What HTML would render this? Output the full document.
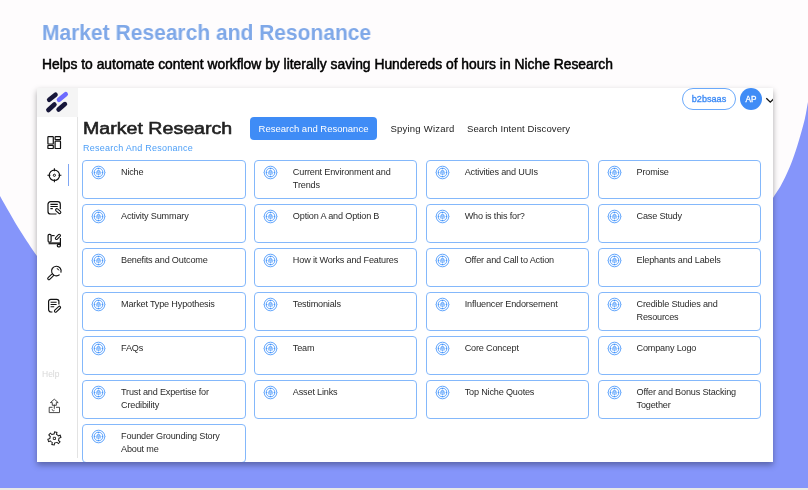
<!DOCTYPE html>
<html lang="en">
<head>
<meta charset="utf-8">
<title>Market Research and Resonance</title>
<style>
*{box-sizing:border-box;margin:0;padding:0}
html,body{width:808px;height:490px;overflow:hidden;background:#fefcfd}
body{position:relative;font-family:"Liberation Sans",sans-serif;color:#222}
#bg{position:absolute;left:0;top:0;width:808px;height:490px}
#strip{position:absolute;left:0;top:488px;width:808px;height:2px;background:#e9e9e7}
#title{position:absolute;left:42px;top:19px;font-size:22px;line-height:28px;font-weight:700;color:#7fa8e8;white-space:nowrap;transform:scaleX(.9545);transform-origin:0 0}
#sub{position:absolute;left:42px;top:54.8px;font-size:13.85px;line-height:18px;font-weight:400;color:#000;white-space:nowrap;-webkit-text-stroke:0.5px #000}
#app{position:absolute;left:37px;top:88px;width:736px;height:374px;background:#fff;box-shadow:0 3px 6px rgba(0,0,10,.34);overflow:hidden}
#in,#sub,#title{will-change:transform}
#in{position:absolute;left:0;top:-1px;width:736px;height:375px}
#side{position:absolute;left:0;top:0;width:41px;height:371px;border-right:1px solid #e3e3e3}
#logo{position:absolute;left:0;top:1px;width:41px;height:29px;background:#f5f5f5}
#side svg{position:absolute;overflow:visible}
#help{position:absolute;left:5px;top:282px;font-size:8.5px;color:#d8d8d8}
#active{position:absolute;left:30.5px;top:77px;width:1.5px;height:22px;background:#7fa6f3}
#h1{position:absolute;left:46px;top:30.5px;font-size:16px;font-weight:400;-webkit-text-stroke:.55px #222;line-height:22px;color:#222;white-space:nowrap;transform:scaleX(1.225);transform-origin:0 0}
#crumb{position:absolute;left:46px;top:55px;font-size:9px;line-height:12px;color:#4d9ff7;white-space:nowrap;letter-spacing:0.25px}
.tab{position:absolute;top:30px;height:23px;line-height:23px;font-size:9.5px;color:#222;white-space:nowrap}
#tab1{left:213px;width:127px;background:#3f8cf6;color:#fff;border-radius:4px;text-align:center}
#tab2{left:353.5px;letter-spacing:.22px}
#tab3{left:430px;letter-spacing:.1px}
#pill{position:absolute;left:645px;top:1px;width:54px;height:22px;border:1px solid #6aa9fb;border-radius:11px;color:#3f8cf6;font-weight:400;-webkit-text-stroke:.35px #3f8cf6;font-size:9.1px;line-height:21.5px;text-align:center}
#ava{position:absolute;left:703px;top:1px;width:22px;height:22px;border-radius:11px;background:#3f8cf6;color:#fff;font-size:8.2px;line-height:23.5px;text-align:center;-webkit-text-stroke:.3px #fff}
#chev{position:absolute;left:728px;top:10px}
.c{position:absolute;width:163.6px;height:39px;border:1px solid #84b8fb;border-radius:4px;background:#fff;font-size:9.1px;line-height:13px;letter-spacing:-.17px;color:#2a2a2a;padding:5px 4px 0 38px;white-space:nowrap}
.c svg{position:absolute;left:9px;top:5px;width:14px;height:14px;overflow:visible}
</style>
</head>
<body>
<svg id="bg" viewBox="0 0 808 490">
<path d="M0 196C5.0 204.9 13.8 220.5 20 230.5C26.2 240.5 31.2 247.6 37 256C42.8 264.4 49.5 273.7 55 281L55 490L0 490Z" fill="#8595fa"/>
<path d="M808 102C806.8 107.9 806.3 112.9 804.7 119.5C803.1 126.1 800.6 134.8 798.6 141.5C796.6 148.2 794.5 154.5 792.5 160C790.5 165.5 788.4 170.1 786.4 174.6C784.4 179.1 782.4 182.9 780.2 186.8C778.0 190.7 777.5 190.6 773 198C768.5 205.4 759.2 221.5 753 231C746.8 240.5 741.5 247.7 736 255L736 490L808 490Z" fill="#8595fa"/>
<rect x="0" y="300" width="808" height="190" fill="#8595fa"/>
</svg>
<div id="strip"></div>
<div id="title">Market Research and Resonance</div>
<div id="sub">Helps to automate content workflow by literally saving Hundereds of hours in Niche Research</div>
<div id="app"><div id="in">
<div id="side">
<div id="logo"></div>
<!--SIDE--><svg width="41" height="375" viewBox="0 0 41 375" style="left:0;top:0">
<g fill="none" stroke-linecap="round" stroke-width="4.6">
<path d="M12.2 12.8L18.5 7.7M11.4 23L17.4 17.5M21.6 22.6L27.9 17.1" stroke="#17173a"/>
<path d="M22 12.8L28.7 7.3" stroke="#6d6bff"/>
</g>
<g fill="none" stroke="#111" stroke-width="1.2">
<rect x="10.9" y="49.6" width="5.4" height="7.4" rx=".6"/><rect x="10.9" y="58.4" width="5.4" height="3.1" rx=".6"/>
<rect x="18.1" y="49.6" width="5.4" height="3.1" rx=".6"/><rect x="18.1" y="54.1" width="5.4" height="7.4" rx=".6"/>
<circle cx="17.4" cy="88.3" r="5.2"/><circle cx="17.4" cy="88.3" r="1.1" stroke-width="1"/>
<path d="M17.4 81.3v3M17.4 92.3v3M10.4 88.3h3M21.4 88.3h3" stroke-width="1.1"/>
<path d="M19.5 127H13.6a2.6 2.6 0 0 1-2.6-2.6V117.3a2.6 2.6 0 0 1 2.6-2.6H20.7a2.6 2.6 0 0 1 2.6 2.6V122.3"/>
<path d="M13.4 117.4H20.8M13.4 119.5H20.8M13.4 121.6H15.8" stroke-width="1.1"/>
<path d="M19.8 122.9L22.6 125.3" stroke-width="3.5" stroke-linecap="round"/><path d="M19.8 122.9L22.6 125.3" stroke="#fff" stroke-width="1.4" stroke-linecap="round"/>
<rect x="11.1" y="147.4" width="3" height="7.8" rx="1.2"/>
<path d="M14.5 148.6H17.6" stroke-width="1.1"/>
<path d="M11.6 156.3H23" stroke-width="2" stroke="#2c2c2c"/>
<path d="M23.4 151V158.4"/>
<rect x="20.3" y="157.3" width="3.1" height="2.5" rx="1.1"/>
<path d="M19.5 151.3L22.3 148.5" stroke-width="3.3" stroke-linecap="round"/><path d="M19.5 151.3L22.3 148.5" stroke="#fff" stroke-width="1.2" stroke-linecap="round"/>
<path d="M22.6 187.6A4.8 4.8 0 1 1 23.9 185.6"/><path d="M19.8 181.6A2.6 2.6 0 0 1 21.9 183.4" stroke-width="1"/>
<path d="M15.3 188.2L11.9 191.5" stroke-width="3.4" stroke-linecap="round"/><path d="M15.3 188.2L11.9 191.5" stroke="#fff" stroke-width="1.2" stroke-linecap="round"/>
<path d="M21.9 217.6V214.6a2.2 2.2 0 0 0-2.2-2.2H13.8a2.2 2.2 0 0 0-2.2 2.2V222.6a2.4 2.4 0 0 0 2.4 2.4H15.4"/>
<path d="M13.6 215.3H19.6M13.6 217.5H19.6M13.6 219.7H17.2" stroke-width="1.1"/>
<path d="M18.6 224L22.4 220.4" stroke-width="3.4" stroke-linecap="round"/><path d="M18.6 224L22.4 220.4" stroke="#fff" stroke-width="1.2" stroke-linecap="round"/>
</g>
<g fill="none" stroke="#333" stroke-width=".9" stroke-linejoin="round">
<path d="M17.3 312.2L21.2 315.6H19.3V318.3H15.3V315.6H13.4Z"/>
<path d="M12.2 320.3H15.5M19 320.3H22.5V325.6H12.2V320.3M17.3 317.5V321.8M15.2 322.2a1.3 1.3 0 0 0 2.2 1.2"/>
<circle cx="17.4" cy="351.4" r="5" fill="#1a1a1a" stroke="none"/><path d="M17.40 351.40L24.06 349.24M17.40 351.40L22.60 356.08M17.40 351.40L15.94 358.25M17.40 351.40L10.74 353.56M17.40 351.40L12.20 346.72M17.40 351.40L18.86 344.55" stroke="#1a1a1a" stroke-width="3.4"/><circle cx="17.4" cy="351.4" r="4" fill="#fff" stroke="none"/><path d="M17.40 351.40L23.11 349.55M17.40 351.40L21.86 355.41M17.40 351.40L16.15 357.27M17.40 351.40L11.69 353.25M17.40 351.40L12.94 347.39M17.40 351.40L18.65 345.53" stroke="#fff" stroke-width="1.4"/>
<rect x="16.3" y="350.3" width="2.2" height="2.2" stroke="#222" stroke-width=".9"/>
</g>
</svg>
<!--/SIDE-->
<div id="active"></div>
<div id="help">Help</div>
</div>
<div id="h1">Market Research</div>
<div id="crumb">Research And Resonance</div>
<div class="tab" id="tab1">Research and Resonance</div>
<div class="tab" id="tab2">Spying Wizard</div>
<div class="tab" id="tab3">Search Intent Discovery</div>
<div id="pill">b2bsaas</div>
<div id="ava">AP</div>
<svg id="chev" width="12" height="8" viewBox="0 0 12 8"><path d="M1.3 1.3L5.3 5.2L9.3 1.3" fill="none" stroke="#111" stroke-width="1.3"/></svg>
<!--CARDS-->
<div class="c" style="left:45px;top:73px"><svg viewBox="0.5 0.5 14 14"><g fill="none" stroke="#4595fb" stroke-width="0.85"><circle cx="7" cy="7" r="6.3"/><circle cx="7" cy="7" r="4.35"/><path d="M7 2.6v1.2M7 10.2v1.2M2.6 7h1.2M10.2 7h1.2" stroke-width="1.1"/><path d="M.1 7h.6M13.3 7h.6" stroke-width=".6"/><path d="M5.45 8.9V6.5a1.55 1.55 0 0 1 3.1 0V8.9" stroke-width="1"/><circle cx="7" cy="6.8" r=".6" stroke-width=".6"/><path d="M6.3 9.1a.7 .9 0 0 1 1.4 0z" fill="#4595fb" stroke-width=".4"/></g></svg>Niche</div>
<div class="c" style="left:216.85px;top:73px"><svg viewBox="0.5 0.5 14 14"><g fill="none" stroke="#4595fb" stroke-width="0.85"><circle cx="7" cy="7" r="6.3"/><circle cx="7" cy="7" r="4.35"/><path d="M7 2.6v1.2M7 10.2v1.2M2.6 7h1.2M10.2 7h1.2" stroke-width="1.1"/><path d="M.1 7h.6M13.3 7h.6" stroke-width=".6"/><path d="M5.45 8.9V6.5a1.55 1.55 0 0 1 3.1 0V8.9" stroke-width="1"/><circle cx="7" cy="6.8" r=".6" stroke-width=".6"/><path d="M6.3 9.1a.7 .9 0 0 1 1.4 0z" fill="#4595fb" stroke-width=".4"/></g></svg>Current Environment and<br>Trends</div>
<div class="c" style="left:388.7px;top:73px"><svg viewBox="0.5 0.5 14 14"><g fill="none" stroke="#4595fb" stroke-width="0.85"><circle cx="7" cy="7" r="6.3"/><circle cx="7" cy="7" r="4.35"/><path d="M7 2.6v1.2M7 10.2v1.2M2.6 7h1.2M10.2 7h1.2" stroke-width="1.1"/><path d="M.1 7h.6M13.3 7h.6" stroke-width=".6"/><path d="M5.45 8.9V6.5a1.55 1.55 0 0 1 3.1 0V8.9" stroke-width="1"/><circle cx="7" cy="6.8" r=".6" stroke-width=".6"/><path d="M6.3 9.1a.7 .9 0 0 1 1.4 0z" fill="#4595fb" stroke-width=".4"/></g></svg>Activities and UUIs</div>
<div class="c" style="left:560.55px;top:73px"><svg viewBox="0.5 0.5 14 14"><g fill="none" stroke="#4595fb" stroke-width="0.85"><circle cx="7" cy="7" r="6.3"/><circle cx="7" cy="7" r="4.35"/><path d="M7 2.6v1.2M7 10.2v1.2M2.6 7h1.2M10.2 7h1.2" stroke-width="1.1"/><path d="M.1 7h.6M13.3 7h.6" stroke-width=".6"/><path d="M5.45 8.9V6.5a1.55 1.55 0 0 1 3.1 0V8.9" stroke-width="1"/><circle cx="7" cy="6.8" r=".6" stroke-width=".6"/><path d="M6.3 9.1a.7 .9 0 0 1 1.4 0z" fill="#4595fb" stroke-width=".4"/></g></svg>Promise</div>
<div class="c" style="left:45px;top:117px"><svg viewBox="0.5 0.5 14 14"><g fill="none" stroke="#4595fb" stroke-width="0.85"><circle cx="7" cy="7" r="6.3"/><circle cx="7" cy="7" r="4.35"/><path d="M7 2.6v1.2M7 10.2v1.2M2.6 7h1.2M10.2 7h1.2" stroke-width="1.1"/><path d="M.1 7h.6M13.3 7h.6" stroke-width=".6"/><path d="M5.45 8.9V6.5a1.55 1.55 0 0 1 3.1 0V8.9" stroke-width="1"/><circle cx="7" cy="6.8" r=".6" stroke-width=".6"/><path d="M6.3 9.1a.7 .9 0 0 1 1.4 0z" fill="#4595fb" stroke-width=".4"/></g></svg>Activity Summary</div>
<div class="c" style="left:216.85px;top:117px"><svg viewBox="0.5 0.5 14 14"><g fill="none" stroke="#4595fb" stroke-width="0.85"><circle cx="7" cy="7" r="6.3"/><circle cx="7" cy="7" r="4.35"/><path d="M7 2.6v1.2M7 10.2v1.2M2.6 7h1.2M10.2 7h1.2" stroke-width="1.1"/><path d="M.1 7h.6M13.3 7h.6" stroke-width=".6"/><path d="M5.45 8.9V6.5a1.55 1.55 0 0 1 3.1 0V8.9" stroke-width="1"/><circle cx="7" cy="6.8" r=".6" stroke-width=".6"/><path d="M6.3 9.1a.7 .9 0 0 1 1.4 0z" fill="#4595fb" stroke-width=".4"/></g></svg>Option A and Option B</div>
<div class="c" style="left:388.7px;top:117px"><svg viewBox="0.5 0.5 14 14"><g fill="none" stroke="#4595fb" stroke-width="0.85"><circle cx="7" cy="7" r="6.3"/><circle cx="7" cy="7" r="4.35"/><path d="M7 2.6v1.2M7 10.2v1.2M2.6 7h1.2M10.2 7h1.2" stroke-width="1.1"/><path d="M.1 7h.6M13.3 7h.6" stroke-width=".6"/><path d="M5.45 8.9V6.5a1.55 1.55 0 0 1 3.1 0V8.9" stroke-width="1"/><circle cx="7" cy="6.8" r=".6" stroke-width=".6"/><path d="M6.3 9.1a.7 .9 0 0 1 1.4 0z" fill="#4595fb" stroke-width=".4"/></g></svg>Who is this for?</div>
<div class="c" style="left:560.55px;top:117px"><svg viewBox="0.5 0.5 14 14"><g fill="none" stroke="#4595fb" stroke-width="0.85"><circle cx="7" cy="7" r="6.3"/><circle cx="7" cy="7" r="4.35"/><path d="M7 2.6v1.2M7 10.2v1.2M2.6 7h1.2M10.2 7h1.2" stroke-width="1.1"/><path d="M.1 7h.6M13.3 7h.6" stroke-width=".6"/><path d="M5.45 8.9V6.5a1.55 1.55 0 0 1 3.1 0V8.9" stroke-width="1"/><circle cx="7" cy="6.8" r=".6" stroke-width=".6"/><path d="M6.3 9.1a.7 .9 0 0 1 1.4 0z" fill="#4595fb" stroke-width=".4"/></g></svg>Case Study</div>
<div class="c" style="left:45px;top:161px"><svg viewBox="0.5 0.5 14 14"><g fill="none" stroke="#4595fb" stroke-width="0.85"><circle cx="7" cy="7" r="6.3"/><circle cx="7" cy="7" r="4.35"/><path d="M7 2.6v1.2M7 10.2v1.2M2.6 7h1.2M10.2 7h1.2" stroke-width="1.1"/><path d="M.1 7h.6M13.3 7h.6" stroke-width=".6"/><path d="M5.45 8.9V6.5a1.55 1.55 0 0 1 3.1 0V8.9" stroke-width="1"/><circle cx="7" cy="6.8" r=".6" stroke-width=".6"/><path d="M6.3 9.1a.7 .9 0 0 1 1.4 0z" fill="#4595fb" stroke-width=".4"/></g></svg>Benefits and Outcome</div>
<div class="c" style="left:216.85px;top:161px"><svg viewBox="0.5 0.5 14 14"><g fill="none" stroke="#4595fb" stroke-width="0.85"><circle cx="7" cy="7" r="6.3"/><circle cx="7" cy="7" r="4.35"/><path d="M7 2.6v1.2M7 10.2v1.2M2.6 7h1.2M10.2 7h1.2" stroke-width="1.1"/><path d="M.1 7h.6M13.3 7h.6" stroke-width=".6"/><path d="M5.45 8.9V6.5a1.55 1.55 0 0 1 3.1 0V8.9" stroke-width="1"/><circle cx="7" cy="6.8" r=".6" stroke-width=".6"/><path d="M6.3 9.1a.7 .9 0 0 1 1.4 0z" fill="#4595fb" stroke-width=".4"/></g></svg>How it Works and Features</div>
<div class="c" style="left:388.7px;top:161px"><svg viewBox="0.5 0.5 14 14"><g fill="none" stroke="#4595fb" stroke-width="0.85"><circle cx="7" cy="7" r="6.3"/><circle cx="7" cy="7" r="4.35"/><path d="M7 2.6v1.2M7 10.2v1.2M2.6 7h1.2M10.2 7h1.2" stroke-width="1.1"/><path d="M.1 7h.6M13.3 7h.6" stroke-width=".6"/><path d="M5.45 8.9V6.5a1.55 1.55 0 0 1 3.1 0V8.9" stroke-width="1"/><circle cx="7" cy="6.8" r=".6" stroke-width=".6"/><path d="M6.3 9.1a.7 .9 0 0 1 1.4 0z" fill="#4595fb" stroke-width=".4"/></g></svg>Offer and Call to Action</div>
<div class="c" style="left:560.55px;top:161px"><svg viewBox="0.5 0.5 14 14"><g fill="none" stroke="#4595fb" stroke-width="0.85"><circle cx="7" cy="7" r="6.3"/><circle cx="7" cy="7" r="4.35"/><path d="M7 2.6v1.2M7 10.2v1.2M2.6 7h1.2M10.2 7h1.2" stroke-width="1.1"/><path d="M.1 7h.6M13.3 7h.6" stroke-width=".6"/><path d="M5.45 8.9V6.5a1.55 1.55 0 0 1 3.1 0V8.9" stroke-width="1"/><circle cx="7" cy="6.8" r=".6" stroke-width=".6"/><path d="M6.3 9.1a.7 .9 0 0 1 1.4 0z" fill="#4595fb" stroke-width=".4"/></g></svg>Elephants and Labels</div>
<div class="c" style="left:45px;top:205px"><svg viewBox="0.5 0.5 14 14"><g fill="none" stroke="#4595fb" stroke-width="0.85"><circle cx="7" cy="7" r="6.3"/><circle cx="7" cy="7" r="4.35"/><path d="M7 2.6v1.2M7 10.2v1.2M2.6 7h1.2M10.2 7h1.2" stroke-width="1.1"/><path d="M.1 7h.6M13.3 7h.6" stroke-width=".6"/><path d="M5.45 8.9V6.5a1.55 1.55 0 0 1 3.1 0V8.9" stroke-width="1"/><circle cx="7" cy="6.8" r=".6" stroke-width=".6"/><path d="M6.3 9.1a.7 .9 0 0 1 1.4 0z" fill="#4595fb" stroke-width=".4"/></g></svg>Market Type Hypothesis</div>
<div class="c" style="left:216.85px;top:205px"><svg viewBox="0.5 0.5 14 14"><g fill="none" stroke="#4595fb" stroke-width="0.85"><circle cx="7" cy="7" r="6.3"/><circle cx="7" cy="7" r="4.35"/><path d="M7 2.6v1.2M7 10.2v1.2M2.6 7h1.2M10.2 7h1.2" stroke-width="1.1"/><path d="M.1 7h.6M13.3 7h.6" stroke-width=".6"/><path d="M5.45 8.9V6.5a1.55 1.55 0 0 1 3.1 0V8.9" stroke-width="1"/><circle cx="7" cy="6.8" r=".6" stroke-width=".6"/><path d="M6.3 9.1a.7 .9 0 0 1 1.4 0z" fill="#4595fb" stroke-width=".4"/></g></svg>Testimonials</div>
<div class="c" style="left:388.7px;top:205px"><svg viewBox="0.5 0.5 14 14"><g fill="none" stroke="#4595fb" stroke-width="0.85"><circle cx="7" cy="7" r="6.3"/><circle cx="7" cy="7" r="4.35"/><path d="M7 2.6v1.2M7 10.2v1.2M2.6 7h1.2M10.2 7h1.2" stroke-width="1.1"/><path d="M.1 7h.6M13.3 7h.6" stroke-width=".6"/><path d="M5.45 8.9V6.5a1.55 1.55 0 0 1 3.1 0V8.9" stroke-width="1"/><circle cx="7" cy="6.8" r=".6" stroke-width=".6"/><path d="M6.3 9.1a.7 .9 0 0 1 1.4 0z" fill="#4595fb" stroke-width=".4"/></g></svg>Influencer Endorsement</div>
<div class="c" style="left:560.55px;top:205px"><svg viewBox="0.5 0.5 14 14"><g fill="none" stroke="#4595fb" stroke-width="0.85"><circle cx="7" cy="7" r="6.3"/><circle cx="7" cy="7" r="4.35"/><path d="M7 2.6v1.2M7 10.2v1.2M2.6 7h1.2M10.2 7h1.2" stroke-width="1.1"/><path d="M.1 7h.6M13.3 7h.6" stroke-width=".6"/><path d="M5.45 8.9V6.5a1.55 1.55 0 0 1 3.1 0V8.9" stroke-width="1"/><circle cx="7" cy="6.8" r=".6" stroke-width=".6"/><path d="M6.3 9.1a.7 .9 0 0 1 1.4 0z" fill="#4595fb" stroke-width=".4"/></g></svg>Credible Studies and<br>Resources</div>
<div class="c" style="left:45px;top:249px"><svg viewBox="0.5 0.5 14 14"><g fill="none" stroke="#4595fb" stroke-width="0.85"><circle cx="7" cy="7" r="6.3"/><circle cx="7" cy="7" r="4.35"/><path d="M7 2.6v1.2M7 10.2v1.2M2.6 7h1.2M10.2 7h1.2" stroke-width="1.1"/><path d="M.1 7h.6M13.3 7h.6" stroke-width=".6"/><path d="M5.45 8.9V6.5a1.55 1.55 0 0 1 3.1 0V8.9" stroke-width="1"/><circle cx="7" cy="6.8" r=".6" stroke-width=".6"/><path d="M6.3 9.1a.7 .9 0 0 1 1.4 0z" fill="#4595fb" stroke-width=".4"/></g></svg>FAQs</div>
<div class="c" style="left:216.85px;top:249px"><svg viewBox="0.5 0.5 14 14"><g fill="none" stroke="#4595fb" stroke-width="0.85"><circle cx="7" cy="7" r="6.3"/><circle cx="7" cy="7" r="4.35"/><path d="M7 2.6v1.2M7 10.2v1.2M2.6 7h1.2M10.2 7h1.2" stroke-width="1.1"/><path d="M.1 7h.6M13.3 7h.6" stroke-width=".6"/><path d="M5.45 8.9V6.5a1.55 1.55 0 0 1 3.1 0V8.9" stroke-width="1"/><circle cx="7" cy="6.8" r=".6" stroke-width=".6"/><path d="M6.3 9.1a.7 .9 0 0 1 1.4 0z" fill="#4595fb" stroke-width=".4"/></g></svg>Team</div>
<div class="c" style="left:388.7px;top:249px"><svg viewBox="0.5 0.5 14 14"><g fill="none" stroke="#4595fb" stroke-width="0.85"><circle cx="7" cy="7" r="6.3"/><circle cx="7" cy="7" r="4.35"/><path d="M7 2.6v1.2M7 10.2v1.2M2.6 7h1.2M10.2 7h1.2" stroke-width="1.1"/><path d="M.1 7h.6M13.3 7h.6" stroke-width=".6"/><path d="M5.45 8.9V6.5a1.55 1.55 0 0 1 3.1 0V8.9" stroke-width="1"/><circle cx="7" cy="6.8" r=".6" stroke-width=".6"/><path d="M6.3 9.1a.7 .9 0 0 1 1.4 0z" fill="#4595fb" stroke-width=".4"/></g></svg>Core Concept</div>
<div class="c" style="left:560.55px;top:249px"><svg viewBox="0.5 0.5 14 14"><g fill="none" stroke="#4595fb" stroke-width="0.85"><circle cx="7" cy="7" r="6.3"/><circle cx="7" cy="7" r="4.35"/><path d="M7 2.6v1.2M7 10.2v1.2M2.6 7h1.2M10.2 7h1.2" stroke-width="1.1"/><path d="M.1 7h.6M13.3 7h.6" stroke-width=".6"/><path d="M5.45 8.9V6.5a1.55 1.55 0 0 1 3.1 0V8.9" stroke-width="1"/><circle cx="7" cy="6.8" r=".6" stroke-width=".6"/><path d="M6.3 9.1a.7 .9 0 0 1 1.4 0z" fill="#4595fb" stroke-width=".4"/></g></svg>Company Logo</div>
<div class="c" style="left:45px;top:293px"><svg viewBox="0.5 0.5 14 14"><g fill="none" stroke="#4595fb" stroke-width="0.85"><circle cx="7" cy="7" r="6.3"/><circle cx="7" cy="7" r="4.35"/><path d="M7 2.6v1.2M7 10.2v1.2M2.6 7h1.2M10.2 7h1.2" stroke-width="1.1"/><path d="M.1 7h.6M13.3 7h.6" stroke-width=".6"/><path d="M5.45 8.9V6.5a1.55 1.55 0 0 1 3.1 0V8.9" stroke-width="1"/><circle cx="7" cy="6.8" r=".6" stroke-width=".6"/><path d="M6.3 9.1a.7 .9 0 0 1 1.4 0z" fill="#4595fb" stroke-width=".4"/></g></svg>Trust and Expertise for<br>Credibility</div>
<div class="c" style="left:216.85px;top:293px"><svg viewBox="0.5 0.5 14 14"><g fill="none" stroke="#4595fb" stroke-width="0.85"><circle cx="7" cy="7" r="6.3"/><circle cx="7" cy="7" r="4.35"/><path d="M7 2.6v1.2M7 10.2v1.2M2.6 7h1.2M10.2 7h1.2" stroke-width="1.1"/><path d="M.1 7h.6M13.3 7h.6" stroke-width=".6"/><path d="M5.45 8.9V6.5a1.55 1.55 0 0 1 3.1 0V8.9" stroke-width="1"/><circle cx="7" cy="6.8" r=".6" stroke-width=".6"/><path d="M6.3 9.1a.7 .9 0 0 1 1.4 0z" fill="#4595fb" stroke-width=".4"/></g></svg>Asset Links</div>
<div class="c" style="left:388.7px;top:293px"><svg viewBox="0.5 0.5 14 14"><g fill="none" stroke="#4595fb" stroke-width="0.85"><circle cx="7" cy="7" r="6.3"/><circle cx="7" cy="7" r="4.35"/><path d="M7 2.6v1.2M7 10.2v1.2M2.6 7h1.2M10.2 7h1.2" stroke-width="1.1"/><path d="M.1 7h.6M13.3 7h.6" stroke-width=".6"/><path d="M5.45 8.9V6.5a1.55 1.55 0 0 1 3.1 0V8.9" stroke-width="1"/><circle cx="7" cy="6.8" r=".6" stroke-width=".6"/><path d="M6.3 9.1a.7 .9 0 0 1 1.4 0z" fill="#4595fb" stroke-width=".4"/></g></svg>Top Niche Quotes</div>
<div class="c" style="left:560.55px;top:293px"><svg viewBox="0.5 0.5 14 14"><g fill="none" stroke="#4595fb" stroke-width="0.85"><circle cx="7" cy="7" r="6.3"/><circle cx="7" cy="7" r="4.35"/><path d="M7 2.6v1.2M7 10.2v1.2M2.6 7h1.2M10.2 7h1.2" stroke-width="1.1"/><path d="M.1 7h.6M13.3 7h.6" stroke-width=".6"/><path d="M5.45 8.9V6.5a1.55 1.55 0 0 1 3.1 0V8.9" stroke-width="1"/><circle cx="7" cy="6.8" r=".6" stroke-width=".6"/><path d="M6.3 9.1a.7 .9 0 0 1 1.4 0z" fill="#4595fb" stroke-width=".4"/></g></svg>Offer and Bonus Stacking<br>Together</div>
<div class="c" style="left:45px;top:337px"><svg viewBox="0.5 0.5 14 14"><g fill="none" stroke="#4595fb" stroke-width="0.85"><circle cx="7" cy="7" r="6.3"/><circle cx="7" cy="7" r="4.35"/><path d="M7 2.6v1.2M7 10.2v1.2M2.6 7h1.2M10.2 7h1.2" stroke-width="1.1"/><path d="M.1 7h.6M13.3 7h.6" stroke-width=".6"/><path d="M5.45 8.9V6.5a1.55 1.55 0 0 1 3.1 0V8.9" stroke-width="1"/><circle cx="7" cy="6.8" r=".6" stroke-width=".6"/><path d="M6.3 9.1a.7 .9 0 0 1 1.4 0z" fill="#4595fb" stroke-width=".4"/></g></svg>Founder Grounding Story<br>About me</div>
<!--/CARDS-->
</div></div>
</body>
</html>
